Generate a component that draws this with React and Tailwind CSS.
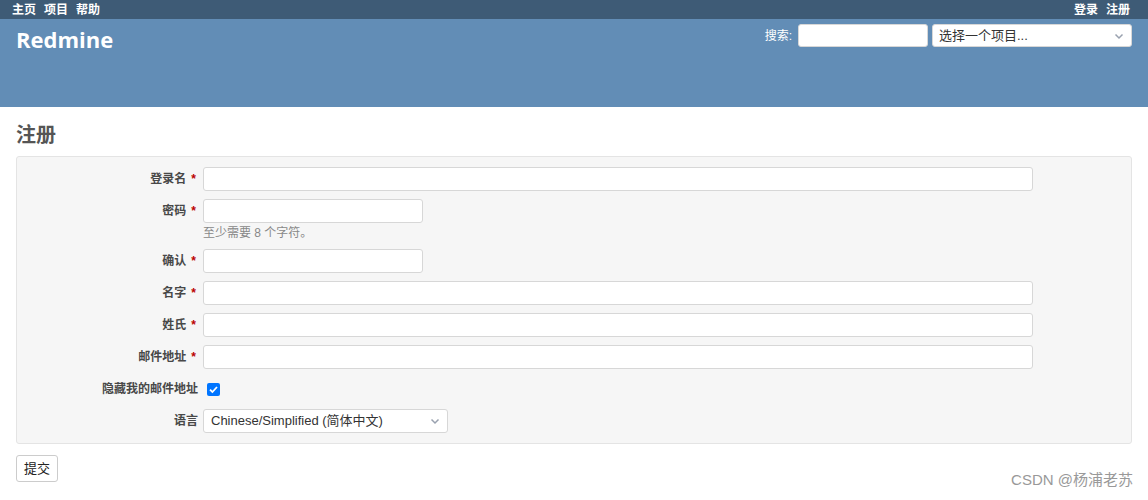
import React from "react";

const font = { fontFamily: '"Liberation Sans", "Noto Sans CJK SC", sans-serif' };

const Chevron = () => (
  <svg width="12" height="12" viewBox="0 0 12 12" className="text-gray-400">
    <path d="M2.5 4.5 L6 8 L9.5 4.5" fill="none" stroke="currentColor" strokeWidth="1.5" />
  </svg>
);

const Row = ({ label, required, children, className = "" }) => (
  <div className={"flex items-start " + className}>
    <div className="w-[182px] shrink-0 text-right pr-[1px] pt-[4px] text-[12px] font-bold text-[#484848] leading-[16px]">
      {label}
      {required && <span className="text-[#bb0000] ml-[5px] mr-[2px]">*</span>}
    </div>
    <div className="ml-[4px]">{children}</div>
  </div>
);

const Input = ({ w }) => (
  <div className={"h-[24px] bg-white border border-[#d7d7d7] rounded-[3px] " + w}></div>
);

const App = () => {
  return (
    <div className="w-[1148px] h-[500px] bg-white relative overflow-hidden" style={font}>
      {/* top menu */}
      <div className="h-[19px] bg-[#3e5b76] flex justify-between items-center px-[12px] text-white text-[12px] font-bold">
        <div className="flex gap-[8px]">
          <span>主页</span>
          <span>项目</span>
          <span>帮助</span>
        </div>
        <div className="flex gap-[8px] pr-[6px]">
          <span>登录</span>
          <span>注册</span>
        </div>
      </div>

      {/* header */}
      <div className="h-[88px] bg-[#628db6] flex justify-between items-start px-[16px]">
        <h1 className="text-white text-[22px] font-bold mt-[4px]" style={{ fontFamily: '"Open Sans", sans-serif' }}>
          Redmine
        </h1>
        <div className="flex items-center mt-[5px]">
          <span className="text-white text-[12px] mr-[6px]">搜索:</span>
          <div className="w-[130px] h-[23px] bg-white border border-[#d7d7d7] rounded-[3px]"></div>
          <div className="w-[200px] h-[23px] ml-[4px] bg-white border border-[#d7d7d7] rounded-[3px] flex items-center justify-between pl-[6px] pr-[6px] text-[13px] text-[#333]">
            <span>选择一个项目...</span>
            <Chevron />
          </div>
        </div>
      </div>

      {/* content */}
      <div className="px-[16px]">
        <h2 className="text-[20px] font-bold text-[#555] mt-[16px] mb-[9px] leading-[24px]">注册</h2>

        <div className="bg-[#f6f6f6] border border-[#e4e4e4] rounded-[3px] pt-[10px] pb-[10px] flex flex-col gap-[8px]">
          <Row label="登录名" required>
            <Input w="w-[830px]" />
          </Row>
          <Row label="密码" required>
            <Input w="w-[220px]" />
            <div className="text-[12px] text-[#888] mt-[2px] leading-[16px]">至少需要 8 个字符。</div>
          </Row>
          <Row label="确认" required>
            <Input w="w-[220px]" />
          </Row>
          <Row label="名字" required>
            <Input w="w-[830px]" />
          </Row>
          <Row label="姓氏" required>
            <Input w="w-[830px]" />
          </Row>
          <Row label="邮件地址" required>
            <Input w="w-[830px]" />
          </Row>
          <Row label="隐藏我的邮件地址" className="h-[24px]">
            <div className="h-[24px] flex items-center pl-[4px]">
              <div className="w-[13px] h-[13px] rounded-[2px] bg-[#0075ff] flex items-center justify-center">
                <svg width="11" height="11" viewBox="0 0 11 11">
                  <path d="M2 5.6 L4.4 8 L9 3" fill="none" stroke="white" strokeWidth="1.8" />
                </svg>
              </div>
            </div>
          </Row>
          <Row label="语言">
            <div className="w-[245px] h-[24px] bg-white border border-[#d7d7d7] rounded-[3px] flex items-center justify-between pl-[7px] pr-[6px] text-[13px] text-[#333]">
              <span>Chinese/Simplified (简体中文)</span>
              <Chevron />
            </div>
          </Row>
        </div>

        <button className="mt-[11px] h-[27px] px-[7px] bg-white border border-[#ccc] rounded-[3px] text-[13px] text-[#222]">
          提交
        </button>
      </div>

      <div className="absolute right-[15px] bottom-[9px] text-[15px] text-[#999]">CSDN @杨浦老苏</div>
    </div>
  );
};

export default App;
